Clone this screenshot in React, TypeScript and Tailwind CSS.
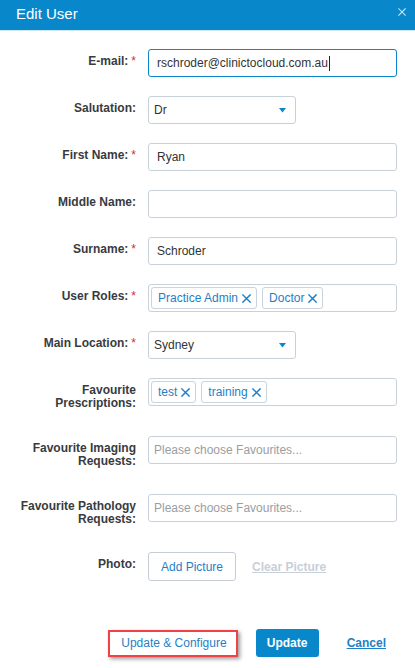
import React from "react";

const XIcon = ({ size = 9, color = "#1f80c6", w = 1.6 }: { size?: number; color?: string; w?: number }) => (
  <svg width={size} height={size} viewBox="0 0 10 10" className="shrink-0">
    <path d="M1 1 L9 9 M9 1 L1 9" stroke={color} strokeWidth={w} strokeLinecap="square" fill="none" />
  </svg>
);

const Caret = () => (
  <svg width="7" height="5" viewBox="0 0 7 5" className="shrink-0">
    <path d="M0 0 L7 0 L3.5 4.5 Z" fill="#0a86cc" />
  </svg>
);

function Row({
  label,
  required,
  children,
}: {
  label: React.ReactNode;
  required?: boolean;
  children: React.ReactNode;
}) {
  return (
    <div className="flex items-start mb-[19px]">
      <div className="w-[136px] shrink-0 text-right text-[12px] font-bold leading-[13px] pt-[6px] pb-[7px] text-[#383b40]">
        {label}
        {required && <span className="text-[#e0282e] font-normal ml-[3px]">*</span>}
      </div>
      <div className="ml-[12px]">{children}</div>
    </div>
  );
}

const TextBox = ({ value, focused, placeholder }: { value?: string; focused?: boolean; placeholder?: string }) => (
  <div
    className={`h-[28px] w-[249px] rounded-[3px] border flex items-center text-[12px] ${
      focused ? "border-[#0a86cc] pl-[8px]" : "border-[#c8d1da] " + (placeholder ? "pl-[5px]" : "pl-[8px]")
    }`}
  >
    {value && <span className="text-[#333]">{value}</span>}
    {focused && <span className="inline-block w-px h-[15px] bg-[#222] ml-[1px]" />}
    {placeholder && <span className="text-[#9a9ea3]">{placeholder}</span>}
  </div>
);

const Select = ({ value }: { value: string }) => (
  <div className="h-[28px] w-[148px] rounded-[3px] border border-[#c8d1da] flex items-center justify-between pl-[5px] pr-[9px] text-[12px] text-[#333]">
    <span>{value}</span>
    <Caret />
  </div>
);

const Tag = ({ text }: { text: string }) => (
  <div className="h-[22px] rounded-[3px] border border-[#c9d3dd] flex items-center pl-[6px] pr-[5px] gap-[4px] text-[12px] text-[#1f80c6]">
    <span>{text}</span>
    <XIcon />
  </div>
);

const Multi = ({ tags }: { tags: string[] }) => (
  <div className="h-[28px] w-[249px] rounded-[3px] border border-[#c8d1da] flex items-center pl-[2px] gap-[5px]">
    {tags.map((t) => (
      <Tag key={t} text={t} />
    ))}
  </div>
);

export default function App() {
  return (
    <div className="w-[415px] h-[668px] bg-white overflow-hidden font-['Liberation_Sans',Arial,sans-serif] text-[#333]">
      <div className="h-[31px] bg-[#0888cb] border-b border-[#cfe6f3] flex items-start justify-between pl-[16px] pr-[9px]">
        <span className="text-white text-[15px] leading-[17px] pt-[5px]">Edit User</span>
        <div className="pt-[8px]">
          <XIcon size={8} color="#cfe8f6" w={1.3} />
        </div>
      </div>

      <div className="pt-[18px] pb-px">
        <Row label="E-mail:" required>
          <TextBox value="rschroder@clinictocloud.com.au" focused />
        </Row>
        <Row label="Salutation:">
          <Select value="Dr" />
        </Row>
        <Row label="First Name:" required>
          <TextBox value="Ryan" />
        </Row>
        <Row label="Middle Name:">
          <TextBox />
        </Row>
        <Row label="Surname:" required>
          <TextBox value="Schroder" />
        </Row>
        <Row label="User Roles:" required>
          <Multi tags={["Practice Admin", "Doctor"]} />
        </Row>
        <Row label="Main Location:" required>
          <Select value="Sydney" />
        </Row>
        <Row
          label={
            <>
              Favourite
              <br />
              Prescriptions:
            </>
          }
        >
          <Multi tags={["test", "training"]} />
        </Row>
        <Row
          label={
            <>
              Favourite Imaging
              <br />
              Requests:
            </>
          }
        >
          <TextBox placeholder="Please choose Favourites..." />
        </Row>
        <Row
          label={
            <>
              Favourite Pathology
              <br />
              Requests:
            </>
          }
        >
          <TextBox placeholder="Please choose Favourites..." />
        </Row>
        <Row label="Photo:">
          <div className="flex items-center">
            <div className="h-[29px] px-[12px] rounded-[3px] border border-[#c5ccd4] flex items-center text-[12px] text-[#1f80c6]">
              Add Picture
            </div>
            <span className="ml-[16px] text-[12px] font-bold text-[#c7cfd8] underline">Clear Picture</span>
          </div>
        </Row>
      </div>

      <div className="mt-[28px] flex items-center justify-end pr-[29px]">
        <div className="h-[27px] border-2 border-[#ef4146] shadow-[2px_2px_4px_rgba(0,0,0,0.4)] flex items-center pl-[11px] pr-[9px] text-[12px] text-[#1f80c6]">
          Update &amp; Configure
        </div>
        <div className="ml-[18px] h-[28px] w-[63px] rounded-[3px] bg-[#0888cb] flex items-center justify-center text-white text-[12px] font-bold">
          Update
        </div>
        <span className="ml-[28px] text-[12px] font-bold text-[#1f80c6] underline">Cancel</span>
      </div>
    </div>
  );
}
